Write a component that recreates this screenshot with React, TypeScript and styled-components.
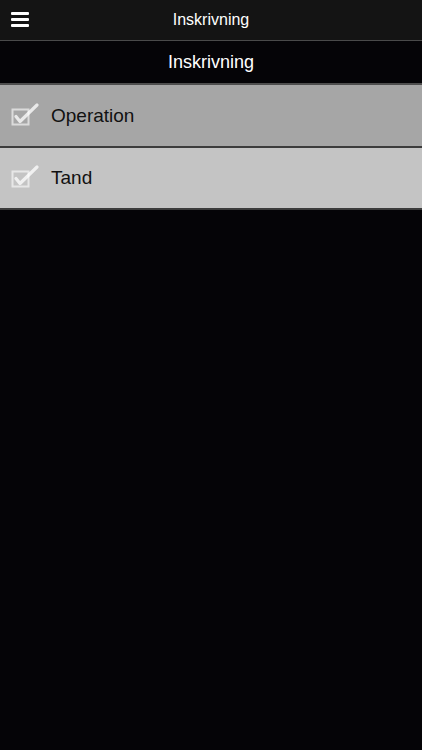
import React from "react";
import styled, { createGlobalStyle } from "styled-components";

const Global = createGlobalStyle`
  html, body { margin: 0; padding: 0; background: #050407; }
  body { font-family: "Liberation Sans", Arial, sans-serif; }
`;

const Page = styled.div`
  width: 422px;
  height: 750px;
  background: #050407;
  display: flex;
  flex-direction: column;
`;

const TopBar = styled.div`
  height: 40px;
  background: #141414;
  border-bottom: 1px solid #4a4a4a;
  display: flex;
  align-items: center;
  justify-content: center;
  position: relative;
  color: #fff;
  font-size: 16px;
`;

const MenuButton = styled.div`
  position: absolute;
  left: 11px;
  top: 12px;
  width: 18px;
  display: flex;
  flex-direction: column;
  gap: 3px;
`;

const MenuLine = styled.div`
  height: 3px;
  background: #fff;
  border-radius: 1px;
`;

const SubBar = styled.div`
  height: 42px;
  background: #050407;
  border-bottom: 2px solid #4e4e4e;
  display: flex;
  align-items: center;
  justify-content: center;
  color: #fff;
  font-size: 18px;
`;

const Row = styled.div<{ $bg: string; $h: number }>`
  height: ${(p) => p.$h}px;
  background: ${(p) => p.$bg};
  border-bottom: 2px solid #3c3c3c;
  display: flex;
  align-items: center;
  padding-left: 11px;
  gap: 12px;
  color: #111;
  font-size: 19px;
`;

const Check = () => (
  <svg width="28" height="26" viewBox="0 0 28 26">
    <rect x="1.5" y="6.5" width="16" height="15" fill="none" stroke="rgba(255,255,255,0.6)" strokeWidth="2" />
    <path d="M5 13.5 L9 18.5 L26 2" fill="none" stroke="rgba(255,255,255,0.75)" strokeWidth="3.2" strokeLinejoin="round" strokeLinecap="round" />
  </svg>
);

export default function App() {
  return (
    <>
      <Global />
      <Page>
        <TopBar>
          <MenuButton>
            <MenuLine />
            <MenuLine />
            <MenuLine />
          </MenuButton>
          Inskrivning
        </TopBar>
        <SubBar>Inskrivning</SubBar>
        <Row $bg="#a6a6a6" $h={61}>
          <Check />
          Operation
        </Row>
        <Row $bg="#c4c4c4" $h={60}>
          <Check />
          Tand
        </Row>
      </Page>
    </>
  );
}
